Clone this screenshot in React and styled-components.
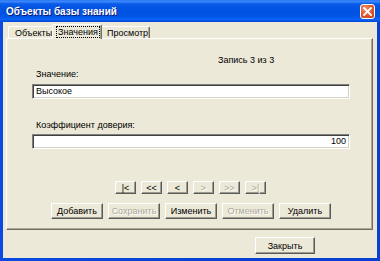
import React from "react";
import styled, { createGlobalStyle } from "styled-components";

const GlobalStyle = createGlobalStyle`
  html, body {
    margin: 0;
    padding: 0;
    background: #ffffff;
  }
  body {
    font-family: Tahoma, "Liberation Sans", "DejaVu Sans", sans-serif;
    font-size: 9px;
    color: #000;
  }
`;

const Window = styled.div`
  width: 380px;
  height: 261px;
  display: flex;
  flex-direction: column;
  background: linear-gradient(to right, #0a4ae0, #0842d6 50%, #0a3fd0);
`;

const TitleBar = styled.div`
  height: 22px;
  flex: none;
  display: flex;
  align-items: center;
  justify-content: space-between;
  padding: 0 5px 0 6px;
  background: linear-gradient(
    to bottom,
    #2a74f0 0%,
    #3d8bff 6%,
    #0a5ae8 18%,
    #0052e0 45%,
    #0156e6 75%,
    #0a64f4 88%,
    #0346d8 100%
  );
`;

const Title = styled.span`
  font-family: "Liberation Sans", "DejaVu Sans", sans-serif;
  font-weight: bold;
  font-size: 10px;
  color: #ffffff;
  text-shadow: 1px 1px 0 #0a1a7a;
  padding-top: 1px;
`;

const CloseButton = styled.div`
  width: 15px;
  height: 15px;
  box-sizing: border-box;
  border: 1px solid #ffffff;
  border-radius: 3px;
  background: radial-gradient(circle at 35% 30%, #f0926a, #e0542a 55%, #c8401a);
  display: flex;
  align-items: center;
  justify-content: center;
`;

const Body = styled.div`
  flex: 1;
  margin: 0 3px 3px;
  background: #ece9d8;
  padding: 2px 4px 0 3px;
  display: flex;
  flex-direction: column;
`;

const TabStrip = styled.div`
  height: 14px;
  display: flex;
  align-items: flex-end;
  padding-left: 2px;
  position: relative;
  z-index: 1;
`;

const Tab = styled.div`
  box-sizing: border-box;
  height: ${(p) => (p.$active ? 15 : 12)}px;
  width: ${(p) => p.$w}px;
  margin: 0 ${(p) => (p.$active ? -2 : 0)}px ${(p) => (p.$active ? -1 : 0)}px;
  padding-left: ${(p) => (p.$active ? 4 : 5)}px;
  display: flex;
  align-items: center;
  background: #ece9d8;
  border-top: 1px solid #ffffff;
  border-left: 1px solid #ffffff;
  border-right: 1px solid #716f64;
  box-shadow: inset -1px 0 0 #aca899;
  border-radius: 2px 2px 0 0;
  position: relative;
  z-index: ${(p) => (p.$active ? 2 : 1)};
`;

const TabText = styled.span`
  line-height: 10px;
  padding: 0 1px;
  outline: ${(p) => (p.$focus ? "1px dotted #000" : "none")};
`;

const Panel = styled.div`
  height: 192px;
  flex: none;
  box-sizing: border-box;
  border-top: 1px solid #ffffff;
  border-left: 1px solid #ffffff;
  border-right: 1px solid #716f64;
  border-bottom: 1px solid #716f64;
  box-shadow: inset -1px -1px 0 #aca899;
  display: flex;
  flex-direction: column;
`;

const RecordLabel = styled.div`
  margin: 15px 0 0 211px;
  line-height: 13px;
`;

const FieldLabel = styled.div`
  margin: ${(p) => p.$top}px 0 0 29px;
  line-height: 13px;
`;

const Field = styled.div`
  box-sizing: border-box;
  height: 15px;
  margin: ${(p) => p.$top}px 22px 0 25px;
  background: #ffffff;
  border-top: 1px solid #808080;
  border-left: 1px solid #808080;
  border-right: 1px solid #ffffff;
  border-bottom: 1px solid #ffffff;
  box-shadow: inset 1px 1px 0 #404040, inset -1px -1px 0 #d4d0c8;
  display: flex;
  align-items: center;
  justify-content: ${(p) => (p.$right ? "flex-end" : "flex-start")};
  padding: 0 3px 0 3px;
  line-height: 13px;
`;

const NavRow = styled.div`
  margin-top: 32px;
  display: flex;
  justify-content: center;
  gap: 5px;
  padding-left: 2px;
`;

const ButtonRow = styled.div`
  margin-top: 9px;
  display: flex;
  justify-content: center;
  gap: 5px;
  padding-left: 3px;
`;

const Button = styled.div`
  box-sizing: border-box;
  width: ${(p) => p.$w}px;
  height: ${(p) => p.$h}px;
  display: flex;
  align-items: center;
  justify-content: center;
  background: #ece9d8;
  border-top: 1px solid #ffffff;
  border-left: 1px solid #ffffff;
  border-right: 1px solid #5a5a5a;
  border-bottom: 1px solid #5a5a5a;
  box-shadow: inset -1px -1px 0 #9d9b90;
  color: ${(p) => (p.$disabled ? "#aca899" : "#000")};
  text-shadow: ${(p) => (p.$disabled ? "1px 1px 0 #ffffff" : "none")};
  line-height: 10px;
  white-space: pre;
`;

const Footer = styled.div`
  display: flex;
  justify-content: flex-end;
  padding: 7px 58px 0 0;
`;

const navButtons = [
  { label: "|<", disabled: false },
  { label: "<<", disabled: false },
  { label: "<", disabled: false },
  { label: ">", disabled: true },
  { label: ">>", disabled: true },
  { label: ">|", disabled: true },
];

const actions = [
  { label: "Добавить", disabled: false },
  { label: "Сохранить", disabled: true },
  { label: "Изменить", disabled: false },
  { label: "Отменить", disabled: true },
  { label: "Удалить", disabled: false },
];

export default function App() {
  return (
    <>
      <GlobalStyle />
      <Window>
        <TitleBar>
          <Title>Объекты базы знаний</Title>
          <CloseButton>
            <svg width="9" height="9" viewBox="0 0 9 9">
              <path d="M1 1 L8 8 M8 1 L1 8" stroke="#ffffff" strokeWidth="1.8" strokeLinecap="square" />
            </svg>
          </CloseButton>
        </TitleBar>
        <Body>
          <TabStrip>
            <Tab $w={46}>
              <TabText>Объекты</TabText>
            </Tab>
            <Tab $w={50} $active>
              <TabText $focus>Значения</TabText>
            </Tab>
            <Tab $w={50}>
              <TabText>Просмотр</TabText>
            </Tab>
          </TabStrip>
          <Panel>
            <RecordLabel>Запись 3 из 3</RecordLabel>
            <FieldLabel $top={1}>Значение:</FieldLabel>
            <Field $top={3}>Высокое</Field>
            <FieldLabel $top={20}>Коэффициент доверия:</FieldLabel>
            <Field $top={2} $right>
              100
            </Field>
            <NavRow>
              {navButtons.map((b) => (
                <Button key={b.label} $w={21} $h={13} $disabled={b.disabled}>
                  {b.label}
                </Button>
              ))}
            </NavRow>
            <ButtonRow>
              {actions.map((b) => (
                <Button key={b.label} $w={52} $h={16} $disabled={b.disabled}>
                  {b.label}
                </Button>
              ))}
            </ButtonRow>
          </Panel>
          <Footer>
            <Button $w={60} $h={17}>
              Закрыть
            </Button>
          </Footer>
        </Body>
      </Window>
    </>
  );
}
